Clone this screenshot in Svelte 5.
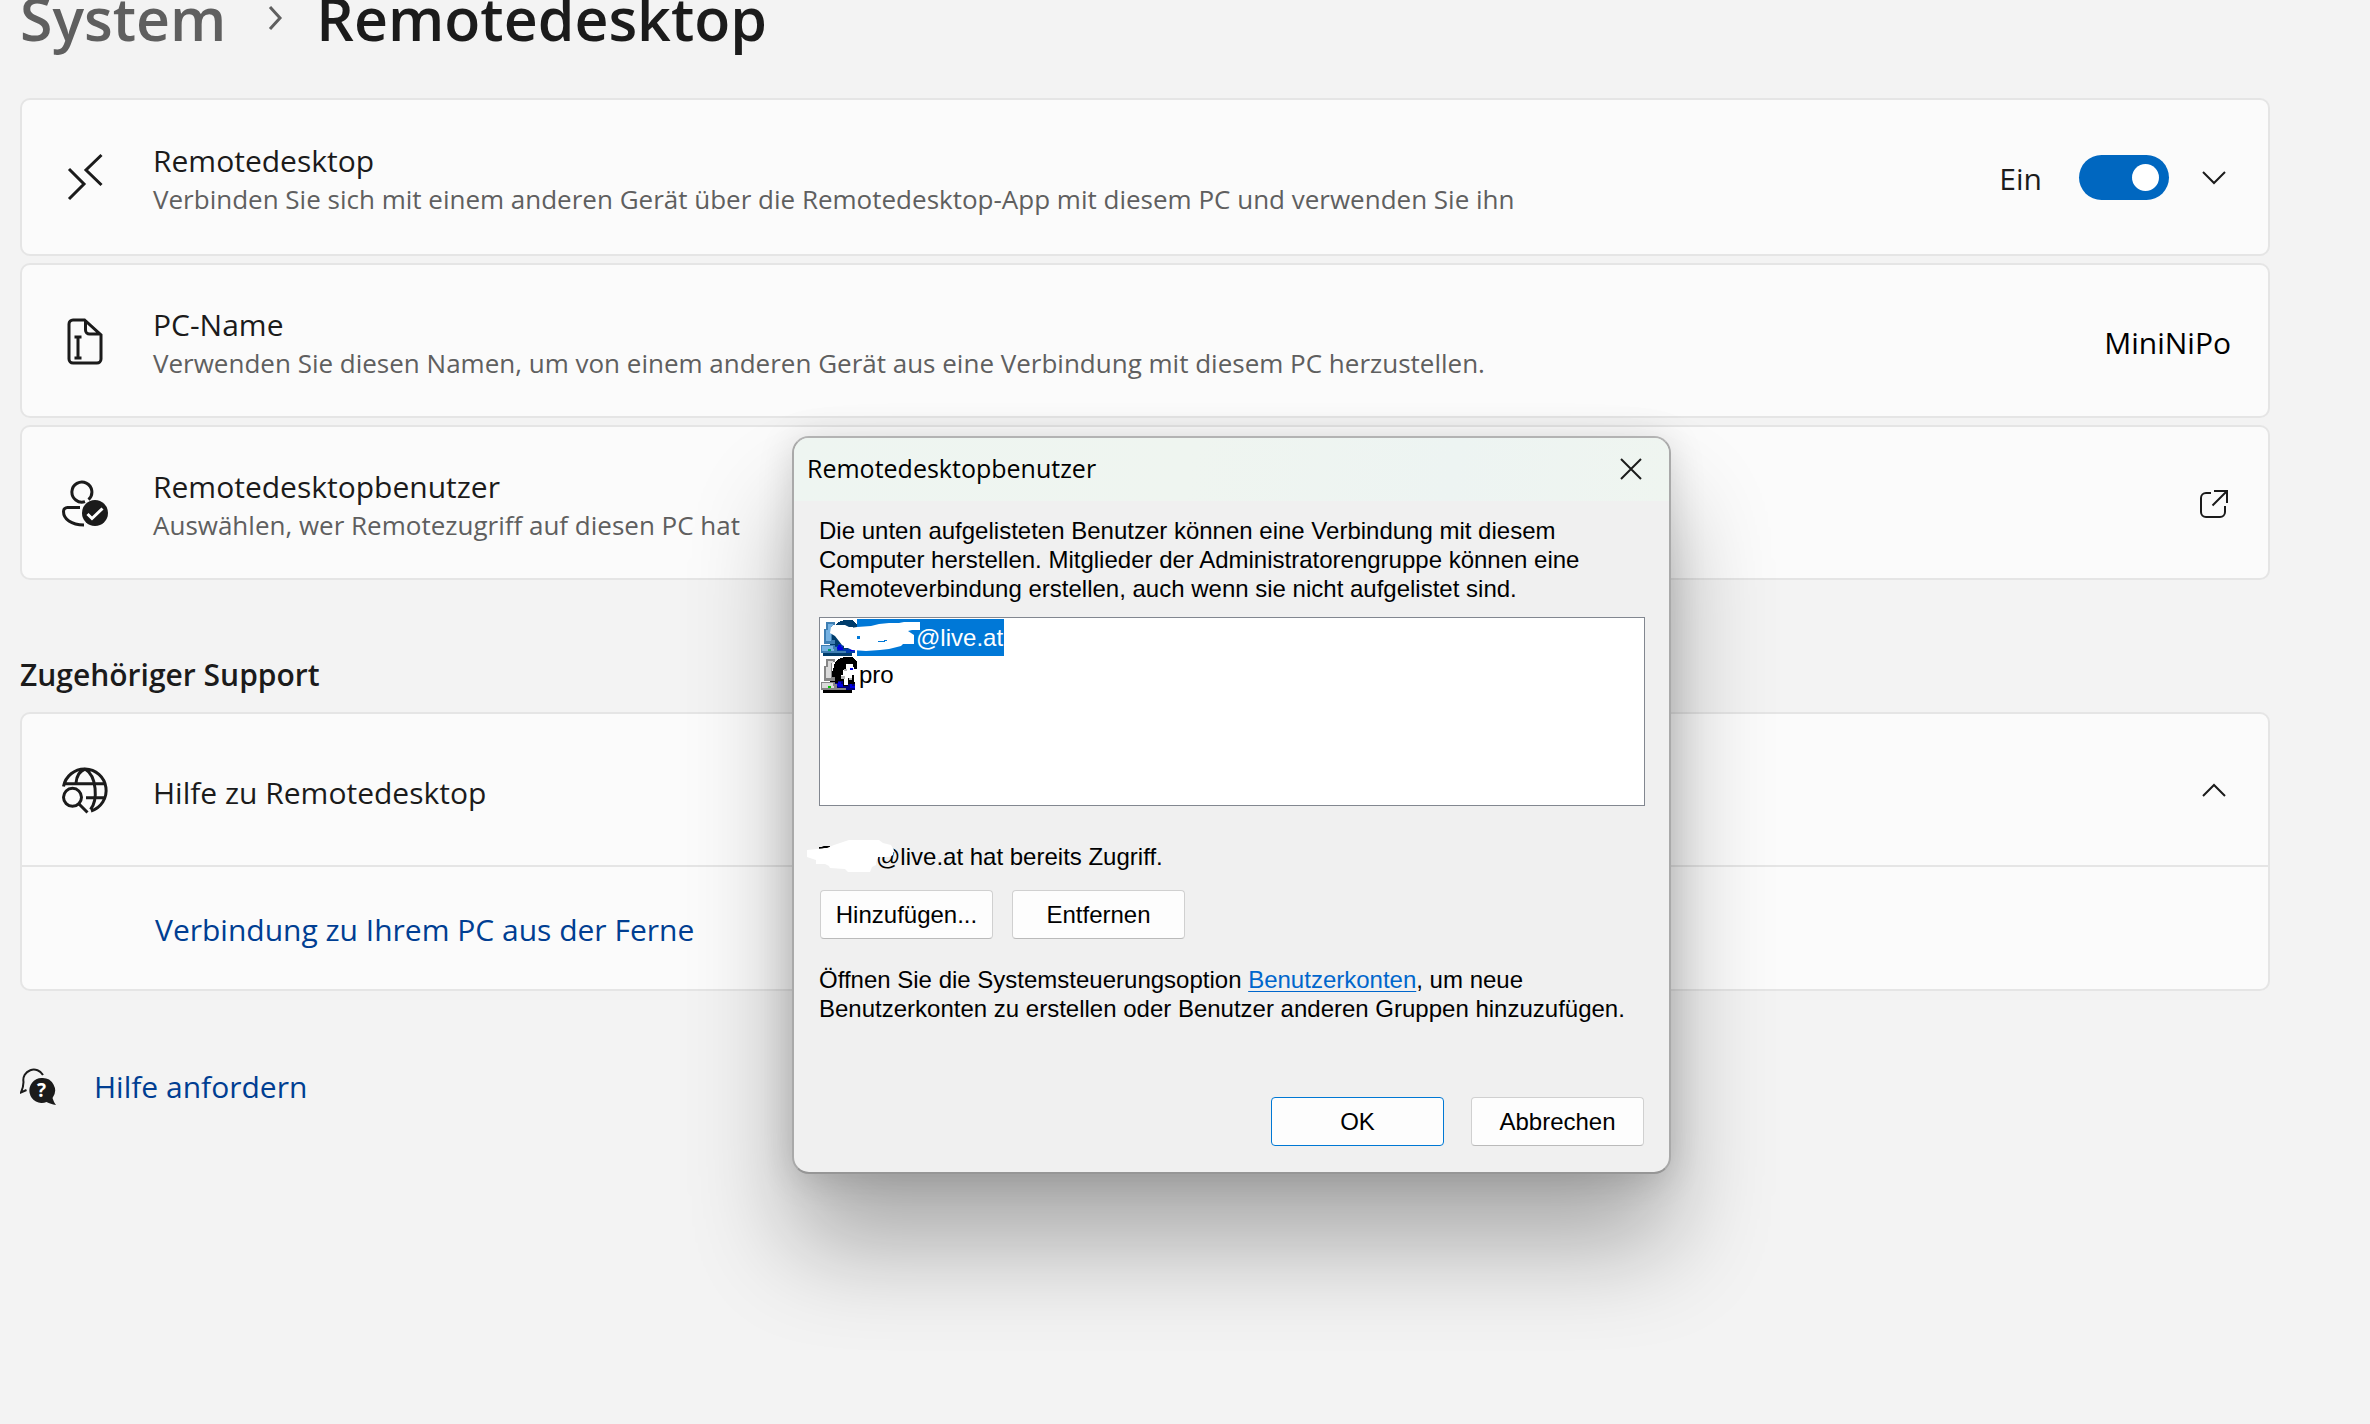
<script>
	let remoteOn = true;
	let helpOpen = true;
	let dialogOpen = true;
	let selected = 0;

	let users = [
		{ name: "@live.at", hidden: true },
		{ name: "pro", hidden: false }
	];

	function closeDialog() {
		dialogOpen = false;
	}

	function toggleHelp() {
		helpOpen = !helpOpen;
	}
</script>

<main class="page">
	<h1 class="crumbs">
		<a href="#system">System</a>
		<svg class="crumbArrow" viewBox="0 0 18 30"><path d="M3 4l10 11-10 11" /></svg>
		<span>Remotedesktop</span>
	</h1>

	<div class="cards">
		<section class="card tall">
			<svg class="icon" viewBox="0 0 48 48">
				<path d="M8 16l15 15L8 46M40.500 2L25 17l15.500 15" />
			</svg>
			<div class="text">
				<label class="title" for="remote">Remotedesktop</label>
				<span class="sub">Verbinden Sie sich mit einem anderen Gerät über die Remotedesktop-App mit diesem PC und verwenden Sie ihn</span>
			</div>
			<label class="state" for="remote">{remoteOn ? "Ein" : "Aus"}</label>
			<input id="remote" class="switch" type="checkbox" role="switch" bind:checked={remoteOn} />
			<button class="iconBtn" aria-label="Erweitern">
				<svg viewBox="0 0 34 34"><path d="M6 12l11 11 11-11" /></svg>
			</button>
		</section>

		<section class="card">
			<svg class="icon" viewBox="0 0 48 48">
				<path d="M12 3h11.500L40 18v24a4 4 0 0 1-4 4H12a4 4 0 0 1-4-4V7a4 4 0 0 1 4-4zM24.500 3v10a4 4 0 0 0 4 4H39" />
				<path d="M17 20v21M13.500 20h7M13.500 41h7" />
			</svg>
			<div class="text">
				<span class="title">PC-Name</span>
				<span class="sub">Verwenden Sie diesen Namen, um von einem anderen Gerät aus eine Verbindung mit diesem PC herzustellen.</span>
			</div>
			<span class="state pcName">MiniNiPo</span>
		</section>

		<section class="card">
			<svg class="icon" viewBox="0 0 48 48">
				<path d="M24 22.600a10 10 0 1 1 3.500-2M19 28.500H6.500a4 4 0 0 0-4 4C2.500 40 10 46 23 46" />
				<circle class="solid" cx="34" cy="34" r="13" />
				<path class="tick" d="M26.500 35l4.500 4.500L41.500 29.500" />
			</svg>
			<div class="text">
				<span class="title">Remotedesktopbenutzer</span>
				<span class="sub">Auswählen, wer Remotezugriff auf diesen PC hat</span>
			</div>
			<button class="iconBtn" aria-label="Öffnen" on:click={() => (dialogOpen = true)}>
				<svg viewBox="0 0 34 34">
					<path d="M14 7H9a5 5 0 0 0-5 5v14a5 5 0 0 0 5 5h14a5 5 0 0 0 5-5v-6M17 5h13v12M15.500 19.500L30 5" />
				</svg>
			</button>
		</section>
	</div>

	<h2>Zugehöriger Support</h2>

	<section class="group">
		<div class="groupHead">
			<svg class="icon" viewBox="0 0 48 48">
				<path d="M2.500 20.500A21.500 21.500 0 1 1 30 45M3 17.700h41.500M25 31.700h19.500M24 3C19 5 15.500 10 15 17M24 3c12 7 13 31 5.500 40.500" />
				<circle cx="11.500" cy="31.300" r="9" />
				<path d="M18 38l8.500 8.500" />
			</svg>
			<div class="text"><span class="title">Hilfe zu Remotedesktop</span></div>
			<button class="iconBtn" aria-label="Reduzieren" on:click={toggleHelp}>
				<svg viewBox="0 0 34 34"><path d="M6 23l11-11 11 11" /></svg>
			</button>
		</div>
		{#if helpOpen}
			<div class="groupBody">
				<a href="#ferne">Verbindung zu Ihrem PC aus der Ferne</a>
			</div>
		{/if}
	</section>

	<div class="help">
		<svg class="helpIcon" viewBox="0 0 36 40">
			<path d="M23 8A10.500 10.500 0 0 0 3.500 15c0 4-.5 6-2.500 10.500l5.500-2.500" />
			<path class="solid" d="M21.500 11a12.500 12.500 0 1 0 5 24.100c3 1.700 5.500 2.300 9.500 2.900-1.500-2-2.500-4-3.500-7A12.500 12.500 0 0 0 21.500 11z" />
			<text x="21.500" y="30" text-anchor="middle">?</text>
		</svg>
		<a href="#hilfe">Hilfe anfordern</a>
	</div>
</main>

{#if dialogOpen}
	<div class="dialog" role="dialog" aria-labelledby="dlgTitle">
		<header>
			<span id="dlgTitle">Remotedesktopbenutzer</span>
			<button class="close" aria-label="Schließen" on:click={closeDialog}>
				<svg viewBox="0 0 22 22"><path d="M1 1l20 20M21 1L1 21" /></svg>
			</button>
		</header>
		<div class="body">
			<p>Die unten aufgelisteten Benutzer können eine Verbindung mit diesem Computer herstellen. Mitglieder der Administratorengruppe können eine Remoteverbindung erstellen, auch wenn sie nicht aufgelistet sind.</p>

			<div class="list" role="listbox" aria-label="Benutzer">
				{#each users as user, i}
					<button class="row" role="option" aria-selected={i == selected} on:click={() => (selected = i)}>
						<svg class="avatar" class:tinted={i == selected} viewBox="0 0 36 36" shape-rendering="crispEdges">
							<path class="black" d="M14 5l3-3 6-2h8l5 4v8h-3v10l1 6-1 5h-2v3H2v-3l7-9z" />
							<path class="grey" d="M5 2h9v3h-3v15h3v4H3V9h2z" />
							<path class="pale" d="M7 4h5v2h-2v15H5V10h2z" />
							<path class="face" d="M25 7h7v3h1v4h2v4h-4v3h-4v7h-4v-6h-3v-4h2v-5h3z" />
							<path class="shade" d="M23 12h3v2h-3zM20 19h4v3h-4zM28 21h3v2h-3z" />
							<path class="navy" d="M13 26h4v-2h5v5h5v-2h7v6H13z" />
							<path class="blue" d="M13 27h4v-2h3v2h2v3h-5v-1h-4zM29 11h3v2h-3zM29 27h2v2h3v2h-5z" />
							<path class="grey" d="M0 25h14v2h2v4h9v2H0z" />
							<path class="pale" d="M1 26h11v3h1v2H1z" />
							<path class="green" d="M7 29h3v2H7z" />
						</svg>
						<span class="name" class:picked={i == selected} class:masked={user.hidden}>{user.name}</span>
						{#if user.hidden}
							<svg class="scribble" viewBox="0 0 94 34">
								<path d="M0 13l1-6 4-2h10l6 3 6-1 14-1 8-2 10-1h10l5-1h16v8h-8l-4 1 6 4v9H73l-2 2-12 3-9 1-14 1-14-1-6-3-4-2-7-9z" />
								<path class="rest" d="M27 16h3v3h-3zM48 21h7v1h-7zM54 20h3v1h-3z" />
							</svg>
						{/if}
					</button>
				{/each}
			</div>

			<p class="access">
				<span>@live.at hat bereits Zugriff.</span>
				<svg class="smear" viewBox="0 0 87 34">
					<path class="trace" d="M12 8h3l2-1h6" />
					<path d="M0 10l20-2 7-3 15-5h30l4 3 8 2 3 5-1 5-3 2H71l-2 5v3l-4 2-2 5H41l-3-3-15-1-1-2-4-2H9v-4l-9-3z" />
				</svg>
			</p>

			<div class="actions">
				<button>Hinzufügen...</button>
				<button>Entfernen</button>
			</div>

			<p>Öffnen Sie die Systemsteuerungsoption <a href="#konten">Benutzerkonten</a>, um neue Benutzerkonten zu erstellen oder Benutzer anderen Gruppen hinzuzufügen.</p>

			<div class="confirm">
				<button class="primary" on:click={closeDialog}>OK</button>
				<button on:click={closeDialog}>Abbrechen</button>
			</div>
		</div>
	</div>
{/if}

<style>
	:global(body) {
		background: #f3f3f3;
		color: #1b1b1b;
		font-family: "Segoe UI", "Open Sans", sans-serif;
		font-size: 30px;
		line-height: 38px;
	}
	.page {
		padding: 0 100px 0 20px;
	}
	svg {
		fill: none;
		stroke: #1b1b1b;
		stroke-width: 2px;
		flex: none;
	}
	a {
		color: #003e92;
		text-decoration: none;
	}
	button {
		font: inherit;
		color: inherit;
		cursor: pointer;
	}

	.crumbs {
		display: flex;
		align-items: center;
		height: 36px;
		margin: 0 0 62px;
		font-size: 59px;
		font-weight: 600;
		line-height: 36px;
	}
	.crumbs a {
		color: #5f5f5f;
	}
	.crumbArrow {
		width: 18px;
		height: 30px;
		margin: 0 31px 0 41px;
		stroke: #5f5f5f;
		stroke-width: 3px;
	}

	.cards {
		display: flex;
		flex-direction: column;
		gap: 7px;
	}
	.card,
	.group {
		background: #fbfbfb;
		border: 2px solid #e5e5e5;
		border-radius: 10px;
	}
	.card,
	.groupHead {
		display: flex;
		align-items: center;
		box-sizing: border-box;
		min-height: 155px;
		padding: 0 37px 0 39px;
	}
	.card.tall {
		min-height: 158px;
	}
	.icon {
		width: 48px;
		height: 48px;
		margin-right: 44px;
		stroke-width: 3px;
	}
	.solid {
		fill: #1b1b1b;
		stroke: none;
	}
	.tick {
		stroke: #fff;
	}
	.text {
		display: flex;
		flex-direction: column;
		flex: 1;
		padding-top: 6px;
	}
	.sub {
		color: #5f5f5f;
		font-size: 26px;
	}
	.state {
		padding-top: 4px;
	}
	.pcName {
		color: #000;
	}
	.switch {
		appearance: none;
		width: 90px;
		height: 45px;
		margin: 0 28px 0 37px;
		padding: 9px 10px;
		box-sizing: border-box;
		border-radius: 23px;
		background: #0067c0;
		display: flex;
		justify-content: flex-end;
	}
	.switch:not(:checked) {
		background: #8a8a8a;
		justify-content: flex-start;
	}
	.switch::before {
		content: "";
		width: 27px;
		height: 27px;
		border-radius: 50%;
		background: #fff;
	}
	.iconBtn {
		width: 34px;
		height: 34px;
		padding: 0;
		border: 0;
		background: none;
	}
	.iconBtn svg {
		display: block;
	}

	h2 {
		margin: 76px 0 18px;
		font-size: 30px;
		font-weight: 600;
		line-height: 38px;
	}
	.groupHead {
		min-height: 151px;
	}
	.groupBody {
		border-top: 2px solid #e5e5e5;
		padding: 44px 37px 40px 133px;
	}

	.help {
		display: flex;
		align-items: center;
		gap: 38px;
		margin-top: 76px;
	}
	.helpIcon {
		width: 36px;
		height: 40px;
	}
	.helpIcon text {
		fill: #fff;
		stroke: none;
		font-size: 19px;
		font-weight: 700;
	}

	.dialog {
		position: absolute;
		left: 792px;
		top: 436px;
		width: 879px;
		box-sizing: border-box;
		border: 2px solid;
		border-color: #b3b3b3 #a9a9a9 #969696;
		border-radius: 17px;
		overflow: hidden;
		background: #f0f0f0;
		color: #000;
		font-family: "Liberation Sans", Arial, sans-serif;
		font-size: 24px;
		line-height: 29px;
		box-shadow: 0 72px 100px rgba(0, 0, 0, 0.3), 0 4px 36px rgba(0, 0, 0, 0.14);
	}
	.dialog header {
		display: flex;
		align-items: center;
		justify-content: space-between;
		height: 61px;
		padding: 0 27px 2px 13px;
		background: linear-gradient(100deg, #eef5f1, #eff5f0 45%, #edf4f2 75%, #eff5f0);
		font-family: "Segoe UI", "Open Sans", sans-serif;
		font-size: 25px;
	}
	.close {
		width: 22px;
		height: 22px;
		padding: 0;
		border: 0;
		background: none;
	}
	.close svg {
		display: block;
	}
	.body {
		padding: 15px 24px 26px 25px;
	}
	.body p {
		margin: 0;
	}
	.body a {
		color: #0066cc;
		text-decoration: underline;
		text-decoration-thickness: 1px;
		text-underline-offset: 3px;
	}
	.list {
		box-sizing: border-box;
		height: 189px;
		margin: 14px 0 36px;
		padding: 1px;
		border: 1px solid #828790;
		background: #fff;
	}
	.row {
		position: relative;
		display: flex;
		align-items: center;
		height: 37px;
		padding: 0;
		border: 0;
		background: none;
	}
	.avatar {
		width: 36px;
		height: 36px;
		stroke: none;
	}
	.name {
		padding: 4px 2px;
	}
	.name.masked {
		padding: 4px 1px 4px 59px;
	}
	.name.picked {
		background: #0078d7;
		color: #fff;
	}
	.black { fill: #000; }
	.grey { fill: #868686; }
	.pale { fill: #dadada; }
	.face { fill: #fff; }
	.shade { fill: #b5b5b5; }
	.navy { fill: #000080; }
	.blue { fill: #0000e0; }
	.green { fill: #00c800; }
	.tinted .black { fill: #003c6b; }
	.tinted .grey { fill: #3f7fb3; }
	.tinted .pale { fill: #76b2e2; }
	.tinted .navy { fill: #003cab; }
	.tinted .green { fill: #00a06a; }
	.scribble {
		position: absolute;
		left: 9px;
		top: 1px;
		width: 94px;
		height: 34px;
		fill: #fff;
		stroke: none;
	}
	.rest {
		fill: #0078d7;
	}

	.access {
		position: relative;
		padding-left: 57px;
	}
	.smear {
		position: absolute;
		left: -12px;
		top: -2px;
		width: 87px;
		height: 34px;
		fill: #fff;
		stroke: none;
	}
	.trace {
		stroke: #000;
	}
	.actions,
	.confirm {
		display: flex;
		gap: 19px;
		margin: 19px 0 26px 1px;
	}
	.confirm {
		justify-content: flex-end;
		gap: 27px;
		margin: 74px 1px 0 0;
	}
	.actions button,
	.confirm button {
		width: 173px;
		height: 49px;
		padding: 0;
		border: 1px solid #d0d0d0;
		border-bottom-color: #bababa;
		border-radius: 4px;
		background: #fdfdfd;
	}
	.confirm .primary {
		border-color: #0078d4;
	}
</style>
